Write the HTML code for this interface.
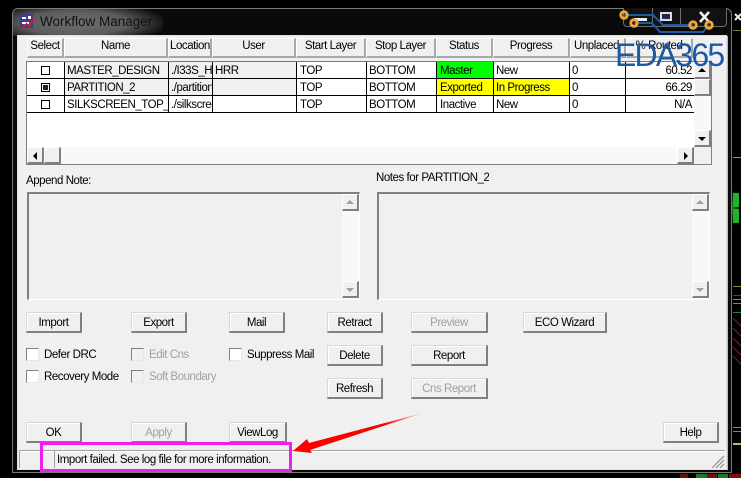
<!DOCTYPE html>
<html><head><meta charset="utf-8"><style>
html,body{margin:0;padding:0;background:#000;}
body{width:741px;height:478px;overflow:hidden;position:relative;font:11.5px/14px "Liberation Sans",sans-serif;letter-spacing:-.45px;color:#000;}
div{position:absolute;box-sizing:border-box;white-space:nowrap;overflow:hidden;}
.b{background:#f0f0f0;border-top:1px solid #d8d8d8;border-left:1px solid #d8d8d8;border-right:2px solid #808080;border-bottom:2px solid #808080;box-shadow:inset 1px 1px #fff;text-align:center;height:21px;line-height:21px;}
.d{color:#a0a0a0;}
.h{top:38px;height:20px;background:#f0f0f0;border-left:1px solid #fff;border-top:1px solid #fff;border-right:2px solid #a8a8a8;border-bottom:2px solid #a8a8a8;text-align:center;line-height:15px;}
.c{height:17px;line-height:19px;padding-left:3px;border-right:1px solid #000;border-bottom:1px solid #000;}
.g{background:#f0f0f0;}
.w{background:#fff;}
.l{position:absolute;}
.cb{width:13px;height:13px;background:#fff;border-top:1px solid #808080;border-left:1px solid #808080;border-right:1px solid #e8e8e8;border-bottom:1px solid #e8e8e8;}
.cbd{background:#f0f0f0;}
.t{line-height:14px;}
.sb{background:#f0f0f0;border-top:1px solid #fff;border-left:1px solid #fff;border-right:2px solid #808080;border-bottom:2px solid #808080;}
</style></head><body>

<!-- window chrome -->
<div style="left:0;top:0;width:741px;height:478px;background:#000"></div>
<div style="left:726px;top:190px;width:15px;height:36px;background:radial-gradient(ellipse 8px 18px at 7px 18px,#1a7a22 0%,rgba(0,0,0,0) 100%)"></div>
<div style="left:12px;top:8px;width:720px;height:465px;border:1px solid #7a7a7a;border-radius:6px 6px 0 0;background:#0a0a0a"></div>
<div style="left:13px;top:9px;width:150px;height:27px;background:radial-gradient(ellipse 95px 22px at 62px 14px,#6e6e6e 0%,#5c5c5c 55%,rgba(20,20,20,0) 100%)"></div>
<div style="left:40px;top:13px;height:18px;line-height:18px;font-size:13.5px;letter-spacing:0;color:#10121a">Workflow Manager</div>

<svg class="l" style="left:19px;top:13px" width="18" height="18" viewBox="0 0 18 18">
<rect x="1" y="1" width="13" height="14" fill="#3a3f88"/><path d="M3 4h4v2H3zM9 3h3v3H9zM3 9h7v2H3z" fill="#fff"/><path d="M1 17L8 9l1 4 6-9 1 1-6 10-2-4-5 6z" fill="#f01818"/>
</svg>

<!-- client area -->
<div style="left:17px;top:35px;width:710px;height:435px;border:1px solid #e0e0e0;background:#f0f0f0"></div>
<div style="left:727px;top:36px;width:1px;height:434px;background:#bbb"></div>

<!-- window buttons -->
<div style="left:623px;top:8px;width:104px;height:19px;border:1px solid #6c6c6c;border-top:0;border-radius:0 0 4px 4px;background:#111"></div>
<div style="left:652px;top:8px;width:1px;height:18px;background:#6c6c6c"></div>
<div style="left:680px;top:8px;width:1px;height:18px;background:#6c6c6c"></div>
<div style="left:634px;top:18px;width:13px;height:3px;background:#f0f0f0"></div>
<div style="left:660px;top:12px;width:12px;height:9px;border:2px solid #ddd;background:#1a2a4a"></div>
<svg class="l" style="left:698px;top:11px" width="13" height="12" viewBox="0 0 13 12"><path d="M2 1l9 10M11 1L2 11" stroke="#f0f0f0" stroke-width="2.6" fill="none"/></svg>

<!-- table header -->
<div class="h" style="left:27px;width:37px">Select</div>
<div class="h" style="left:64px;width:104px">Name</div>
<div class="h" style="left:168px;width:44px;text-align:left;padding-left:1px">Location</div>
<div class="h" style="left:212px;width:84px">User</div>
<div class="h" style="left:296px;width:70px">Start Layer</div>
<div class="h" style="left:366px;width:70px">Stop Layer</div>
<div class="h" style="left:436px;width:57px">Status</div>
<div class="h" style="left:493px;width:77px">Progress</div>
<div class="h" style="left:570px;width:56px;text-align:left;padding-left:3px">Unplaced</div>
<div class="h" style="left:626px;width:67px">% Routed</div>

<!-- list -->
<div style="left:26px;top:61px;width:686px;height:104px;background:#fff;border:1px solid #808080;border-top:2px solid #777"></div>

<div class="c w" style="left:27px;top:62px;width:38px"></div>
<div class="c g" style="left:65px;top:62px;width:104px;padding-left:2px">MASTER_DESIGN</div>
<div class="c g" style="left:169px;top:62px;width:44px;padding-left:2px">./I33S_HRR</div>
<div class="c g" style="left:213px;top:62px;width:84px;padding-left:2px">HRR</div>
<div class="c w" style="left:297px;top:62px;width:70px">TOP</div>
<div class="c w" style="left:367px;top:62px;width:70px;padding-left:2px">BOTTOM</div>
<div class="c" style="left:437px;top:62px;width:57px;background:#0f0">Master</div>
<div class="c w" style="left:494px;top:62px;width:76px;padding-left:2px">New</div>
<div class="c w" style="left:570px;top:62px;width:56px;padding-left:2px">0</div>
<div class="c w" style="left:626px;top:62px;width:68px;text-align:right;padding-right:2px;border-right:0">60.52</div>

<div class="c w" style="left:27px;top:79px;width:38px"></div>
<div class="c g" style="left:65px;top:79px;width:104px;padding-left:2px">PARTITION_2</div>
<div class="c g" style="left:169px;top:79px;width:44px;padding-left:2px">./partition</div>
<div class="c g" style="left:213px;top:79px;width:84px"></div>
<div class="c w" style="left:297px;top:79px;width:70px">TOP</div>
<div class="c w" style="left:367px;top:79px;width:70px;padding-left:2px">BOTTOM</div>
<div class="c" style="left:437px;top:79px;width:57px;background:#ff0">Exported</div>
<div class="c" style="left:494px;top:79px;width:76px;background:#ff0;padding-left:2px">In Progress</div>
<div class="c w" style="left:570px;top:79px;width:56px;padding-left:2px">0</div>
<div class="c w" style="left:626px;top:79px;width:68px;text-align:right;padding-right:2px;border-right:0">66.29</div>

<div class="c w" style="left:27px;top:96px;width:38px"></div>
<div class="c w" style="left:65px;top:96px;width:104px;padding-left:2px">SILKSCREEN_TOP_</div>
<div class="c w" style="left:169px;top:96px;width:44px;padding-left:2px">./silkscreen</div>
<div class="c w" style="left:213px;top:96px;width:84px"></div>
<div class="c w" style="left:297px;top:96px;width:70px">TOP</div>
<div class="c w" style="left:367px;top:96px;width:70px;padding-left:2px">BOTTOM</div>
<div class="c w" style="left:437px;top:96px;width:57px">Inactive</div>
<div class="c w" style="left:494px;top:96px;width:76px;padding-left:2px">New</div>
<div class="c w" style="left:570px;top:96px;width:56px;padding-left:2px">0</div>
<div class="c w" style="left:626px;top:96px;width:68px;text-align:right;padding-right:2px;border-right:0">N/A</div>

<!-- row checkboxes -->
<div style="left:41px;top:66px;width:9px;height:9px;border:1px solid #000;background:#fff"></div>
<div style="left:41px;top:83px;width:9px;height:9px;border:1px solid #000;background:#fff"></div>
<div style="left:43px;top:85px;width:5px;height:5px;background:#222"></div>
<div style="left:41px;top:100px;width:9px;height:9px;border:1px solid #000;background:#fff"></div>

<!-- table scrollbars -->
<div style="left:27px;top:147px;width:667px;height:17px;background:#f8f8f8"></div>
<div class="sb" style="left:27px;top:147px;width:17px;height:17px"></div>
<div style="left:33px;top:152px;width:0;height:0;border:4px solid transparent;border-right:4px solid #000;border-left:0"></div>
<div class="sb" style="left:44px;top:147px;width:17px;height:17px"></div>
<div class="sb" style="left:677px;top:147px;width:17px;height:17px"></div>
<div style="left:684px;top:152px;width:0;height:0;border:4px solid transparent;border-left:4px solid #000;border-right:0"></div>
<div style="left:694px;top:62px;width:17px;height:85px;background:#f8f8f8"></div>
<div class="sb" style="left:694px;top:62px;width:17px;height:17px"></div>
<div style="left:698px;top:68px;width:0;height:0;border:4px solid transparent;border-bottom:4px solid #000;border-top:0"></div>
<div class="sb" style="left:694px;top:79px;width:17px;height:17px"></div>
<div class="sb" style="left:694px;top:130px;width:17px;height:17px"></div>
<div style="left:698px;top:137px;width:0;height:0;border:4px solid transparent;border-top:4px solid #000;border-bottom:0"></div>
<div style="left:694px;top:147px;width:17px;height:17px;background:#f0f0f0"></div>

<!-- notes -->
<div class="t" style="left:26px;top:174px">Append Note:</div>
<div class="t" style="left:376px;top:171px">Notes for PARTITION_2</div>

<div style="left:27px;top:192px;width:333px;height:108px;background:#f0f0f0;border-top:2px solid #808080;border-left:2px solid #808080;border-right:1px solid #fff;border-bottom:1px solid #fff"></div>
<div style="left:342px;top:194px;width:17px;height:105px;background:#f8f8f8"></div>
<div class="sb" style="left:342px;top:194px;width:17px;height:17px"></div>
<div style="left:346px;top:200px;width:0;height:0;border:4px solid transparent;border-bottom:4px solid #a0a0a0;border-top:0"></div>
<div class="sb" style="left:342px;top:281px;width:17px;height:17px"></div>
<div style="left:346px;top:288px;width:0;height:0;border:4px solid transparent;border-top:4px solid #a0a0a0;border-bottom:0"></div>

<div style="left:377px;top:192px;width:333px;height:108px;background:#f0f0f0;border-top:2px solid #808080;border-left:2px solid #808080;border-right:1px solid #fff;border-bottom:1px solid #fff"></div>
<div style="left:692px;top:194px;width:17px;height:105px;background:#f8f8f8"></div>
<div class="sb" style="left:692px;top:194px;width:17px;height:17px"></div>
<div style="left:696px;top:200px;width:0;height:0;border:4px solid transparent;border-bottom:4px solid #a0a0a0;border-top:0"></div>
<div class="sb" style="left:692px;top:281px;width:17px;height:17px"></div>
<div style="left:696px;top:288px;width:0;height:0;border:4px solid transparent;border-top:4px solid #a0a0a0;border-bottom:0"></div>

<!-- buttons -->
<div class="b" style="left:26px;top:312px;width:56px">Import</div>
<div class="b" style="left:131px;top:312px;width:56px">Export</div>
<div class="b" style="left:229px;top:312px;width:56px">Mail</div>
<div class="b" style="left:327px;top:312px;width:56px">Retract</div>
<div class="b" style="left:327px;top:345px;width:56px">Delete</div>
<div class="b" style="left:327px;top:378px;width:56px">Refresh</div>
<div class="b d" style="left:411px;top:312px;width:77px">Preview</div>
<div class="b" style="left:411px;top:345px;width:77px">Report</div>
<div class="b d" style="left:411px;top:378px;width:77px">Cns Report</div>
<div class="b" style="left:523px;top:312px;width:84px">ECO Wizard</div>
<div class="b" style="left:26px;top:422px;width:56px">OK</div>
<div class="b d" style="left:131px;top:422px;width:56px">Apply</div>
<div class="b" style="left:229px;top:422px;width:58px">ViewLog</div>
<div class="b" style="left:663px;top:422px;width:56px">Help</div>

<!-- checks -->
<div class="cb" style="left:26px;top:348px"></div><div class="t" style="left:44px;top:348px">Defer DRC</div>
<div class="cb" style="left:26px;top:370px"></div><div class="t" style="left:44px;top:370px">Recovery Mode</div>
<div class="cb cbd" style="left:131px;top:348px"></div><div class="t d" style="left:149px;top:348px">Edit Cns</div>
<div class="cb cbd" style="left:131px;top:370px"></div><div class="t d" style="left:149px;top:370px">Soft Boundary</div>
<div class="cb" style="left:229px;top:348px"></div><div class="t" style="left:247px;top:348px">Suppress Mail</div>

<!-- status bar -->
<div style="left:19px;top:450px;width:706px;height:1px;background:#a0a0a0"></div>
<div style="left:19px;top:451px;width:706px;height:1px;background:#fff"></div>
<div style="left:19px;top:450px;width:1px;height:18px;background:#a0a0a0"></div>
<div style="left:54px;top:450px;width:1px;height:18px;background:#a0a0a0"></div>
<div class="t" style="left:57px;top:453px">Import failed. See log file for more information.</div>
<svg class="l" style="left:711px;top:455px" width="14" height="13" viewBox="0 0 14 13"><path d="M13 1L1 13M13 5L5 13M13 9L9 13" stroke="#999" stroke-width="1.3" fill="none"/></svg>

<!-- annotation -->
<div style="left:40px;top:442px;width:252px;height:30px;border:3px solid #f01ff0;background:transparent"></div>
<svg class="l" style="left:280px;top:400px" width="150" height="70" viewBox="0 0 150 70"><defs><linearGradient id="a" x1="0" x2="1" y1="0" y2="0"><stop offset=".7" stop-color="#f00"/><stop offset="1" stop-color="#f00" stop-opacity=".15"/></linearGradient></defs><path d="M13 51L27 39l2 4L143 13 30 50l2 3z" fill="url(#a)"/></svg>

<!-- logo -->
<svg class="l" style="left:615px;top:5px" width="105" height="32" viewBox="0 0 105 32">
<path d="M9 10H38L48 20H78M19 18H37L45 27H88L94 20" stroke="#1a5aa6" stroke-width="2" fill="none"/>
<g fill="none" stroke="#f2a534" stroke-width="3"><circle cx="9" cy="10" r="3.2"/><circle cx="19" cy="18" r="3.2"/><circle cx="78" cy="20" r="3.2"/><circle cx="94" cy="20" r="3.2"/></g>
</svg>
<div style="left:615px;top:39px;height:32px;width:120px;line-height:32px;font-size:32px;color:#1a5aa6;letter-spacing:-1.8px">EDA365</div>

<!-- background on the right -->
<svg class="l" style="left:733px;top:0" width="8" height="478" viewBox="0 0 8 478">
<path d="M2 14l6 6M2 20l6-6" stroke="#eee" stroke-width="2"/>
<rect x="0" y="30" width="8" height="1" fill="#5a8a30"/>
<rect x="0" y="157" width="8" height="1" fill="#d08040"/>
<rect x="0" y="193" width="6" height="14" fill="#22b030"/><rect x="0" y="209" width="6" height="14" fill="#22b030"/>
<rect x="0" y="286" width="8" height="1" fill="#6a9a30"/><rect x="0" y="295" width="8" height="1" fill="#2040d0"/><rect x="0" y="299" width="8" height="1" fill="#6a9a30"/><rect x="0" y="303" width="8" height="1" fill="#6a9a30"/><rect x="0" y="312" width="8" height="1" fill="#208030"/>
<path d="M0 318l8 8M0 328l8 8M0 338l8 8M0 347l8 8M0 356l8 8" stroke="#901818"/>
<rect x="0" y="427" width="8" height="1" fill="#6a9a30"/><rect x="0" y="431" width="8" height="1" fill="#6a9a30"/><rect x="0" y="443" width="8" height="2" fill="#c8b070"/>
</svg>
<svg class="l" style="left:680px;top:473px" width="61" height="5" viewBox="0 0 61 5"><rect x="0" y="1" width="8" height="4" fill="#601010"/><rect x="16" y="1" width="11" height="4" fill="#1a7a20"/><rect x="27" y="1" width="10" height="4" fill="#701010"/><rect x="38" y="1" width="10" height="4" fill="#1a7a20"/><rect x="49" y="1" width="12" height="4" fill="#801010"/></svg>
</body></html>
